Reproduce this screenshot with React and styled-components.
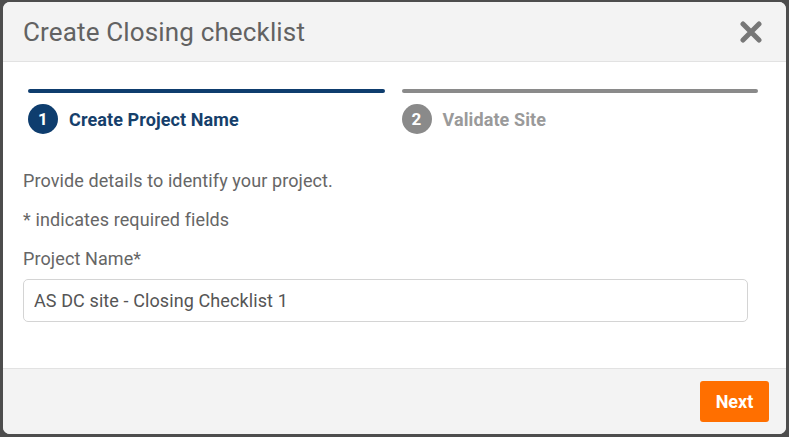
import styled, { createGlobalStyle } from "styled-components";

const GlobalStyle = createGlobalStyle`
  html, body {
    margin: 0;
    padding: 0;
    background: #4d4d4d;
    font-family: Roboto, "Liberation Sans", sans-serif;
  }
  * { box-sizing: border-box; }
`;

const steps = [
  { n: 1, label: "Create Project Name", active: true },
  { n: 2, label: "Validate Site", active: false },
];

export default function App() {
  return (
    <>
      <GlobalStyle />
      <Backdrop>
        <Modal>
          <Header>
            <Title>Create Closing checklist</Title>
            <CloseButton aria-label="close">
              <svg width="22" height="22" viewBox="0 0 22 22">
                <path
                  d="M3 3 L19 19 M19 3 L3 19"
                  stroke="#777"
                  strokeWidth="5"
                  strokeLinecap="round"
                />
              </svg>
            </CloseButton>
          </Header>
          <Body>
            <Stepper>
              {steps.map((s) => (
                <Step key={s.n}>
                  <Bar $active={s.active} />
                  <StepLabel $active={s.active}>
                    <Dot $active={s.active}>{s.n}</Dot>
                    {s.label}
                  </StepLabel>
                </Step>
              ))}
            </Stepper>
            <Text>Provide details to identify your project.</Text>
            <Text>* indicates required fields</Text>
            <Label>Project Name*</Label>
            <Input defaultValue="AS DC site - Closing Checklist 1" />
          </Body>
          <Footer>
            <NextButton>Next</NextButton>
          </Footer>
        </Modal>
      </Backdrop>
    </>
  );
}

const Backdrop = styled.div`
  width: 789px;
  height: 437px;
  padding: 2px 3px 3px 3px;
`;

const Modal = styled.div`
  height: 100%;
  background: #fff;
  border-radius: 7px;
  overflow: hidden;
  display: flex;
  flex-direction: column;
`;

const Header = styled.div`
  height: 60px;
  background: #f3f3f3;
  border-bottom: 1px solid #e2e2e2;
  display: flex;
  align-items: center;
  justify-content: space-between;
  padding: 0 24px 0 20px;
`;

const Title = styled.h1`
  margin: 0;
  font-size: 26px;
  font-weight: 400;
  letter-spacing: 0.15px;
  color: #626262;
`;

const CloseButton = styled.button`
  border: 0;
  background: none;
  padding: 0;
  display: flex;
  cursor: pointer;
`;

const Body = styled.div`
  flex: 1;
  padding: 27px 38px 0 20px;
`;

const Stepper = styled.div`
  display: flex;
  gap: 17px;
  padding-left: 5px;
  margin: 0 -10px 36px 0;
`;

const Step = styled.div`
  flex: 1;
  display: flex;
  flex-direction: column;
  gap: 11px;
`;

const Bar = styled.div`
  height: 4px;
  border-radius: 2px;
  background: ${(p) => (p.$active ? "#0e3d6e" : "#8a8a8a")};
`;

const StepLabel = styled.div`
  display: flex;
  align-items: center;
  gap: 11px;
  font-size: 18px;
  font-weight: 700;
  letter-spacing: 0.1px;
  color: ${(p) => (p.$active ? "#163f6b" : "#9a9a9a")};
`;

const Dot = styled.span`
  width: 30px;
  height: 30px;
  border-radius: 50%;
  background: ${(p) => (p.$active ? "#0e3d6e" : "#8a8a8a")};
  color: #fff;
  font-size: 17px;
  font-weight: 700;
  display: flex;
  align-items: center;
  justify-content: center;
`;

const Text = styled.p`
  margin: 0 0 18px;
  font-size: 18px;
  letter-spacing: 0.1px;
  color: #666;
  line-height: 21px;
`;

const Label = styled(Text)`
  margin-bottom: 10px;
`;

const Input = styled.input`
  display: block;
  width: 100%;
  height: 43px;
  border: 1px solid #d4d4d4;
  border-radius: 5px;
  padding: 0 10px;
  font-family: inherit;
  font-size: 18px;
  letter-spacing: 0.1px;
  color: #555;
  outline: none;
`;

const Footer = styled.div`
  height: 66px;
  background: #f3f3f3;
  border-top: 1px solid #e2e2e2;
  display: flex;
  align-items: center;
  justify-content: flex-end;
  padding: 0 17px 0 0;
`;

const NextButton = styled.button`
  width: 69px;
  height: 41px;
  border: 0;
  border-radius: 3px;
  background: #ff6f00;
  color: #fff;
  font-family: inherit;
  font-size: 18px;
  font-weight: 700;
  cursor: pointer;
`;
